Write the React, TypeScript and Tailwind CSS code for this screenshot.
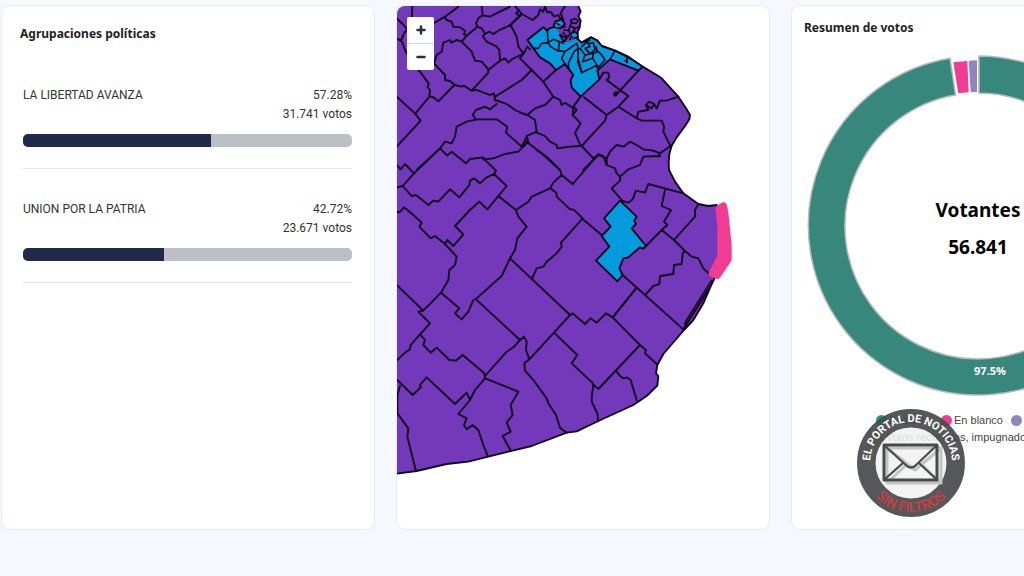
import { Minus, Plus } from "lucide-react"

const parties = [
  { name: "LA LIBERTAD AVANZA", percent: 57.28, votes: "31.741" },
  { name: "UNION POR LA PATRIA", percent: 42.72, votes: "23.671" },
]

// Land mass of the province, in map units
const land =
  "M-10 -10H547L544 0L551 17L544 30L551 44L547 67L542 77L543 100L554 110L582 94L601 104L614 120L654 134L694 152L737 182L779 207L794 217L844 272L867 307L879 327L877 340L864 360L839 394L824 419L817 444L815 470L816 492L834 527L859 562L904 594L934 600L959 597L968 690L968 760L951 820L937 850L919 892L889 942L861 972L799 1044L781 1077L777 1102L784 1110L781 1139L749 1170L709 1197L604 1245L539 1276L509 1280L404 1320L334 1337L214 1367L149 1374L59 1395L0 1403L-10 1404Z"

// District borders, grouped by map sheet
const sheets = [
  {
    name: "noroeste",
    transform: "translate(-21 -18)",
    borders:
      "M67 18L66 50M20 55L38 72L52 88M20 118L35 118L42 100L52 88M25 118L36 125L45 150L70 195L90 215L116 250L113 262L120 270L118 288L130 292L145 304L193 255M118 290L75 342M20 290L75 340L92 362L20 440M130 70L165 50L205 20M165 50L170 60L185 65L190 80L210 82L225 92L222 103L230 107L262 80L258 70L265 55L278 46L275 18M278 46L300 50L360 20M262 80L275 85L285 102L298 95L310 102L325 92L362 75L390 48L378 40L388 30M230 107L215 125L200 120L185 128L180 120L160 128L155 155L140 165L132 190L165 225L165 240L180 243L195 255L215 260L222 257L245 272L260 270L300 285L312 280L315 300L345 310L355 315L375 330L410 345M245 272L295 218L295 208L275 185L255 182L245 155L215 125M295 210L330 182L328 150L320 140L290 125L278 108L285 102M330 182L345 175L355 188L365 178L398 162L405 155M362 75L380 110L385 140L400 160M425 210L395 240L315 290M320 312L300 328L285 320L258 330L248 345L258 358M80 510L150 445L165 425L185 430L195 410L200 380L230 365L260 358L320 358L352 380L348 398L395 440M150 445L172 467L185 455L228 490L240 477L280 472M280 478L310 475L345 462L385 455L400 440L410 425",
  },
  {
    name: "noreste",
    transform: "translate(339 -18)",
    borders:
      "M15 18L35 42L68 60L85 45L90 28L100 35L105 20L112 38L122 35L132 50L145 45L150 55L160 60M165 18L152 40L160 60M35 42L0 75M30 175L42 158L52 140L60 148M30 175L65 210L100 245L130 290L105 315L75 325L52 345M100 245L138 210M130 290L150 300L155 315L165 308L190 325L188 345M212 290L190 320L200 330L188 345L212 370L195 398L212 438M222 292L290 345L285 362L215 438L250 475L265 465L290 475M290 345L325 320L355 288L330 270L290 240L298 232L295 218L280 218L268 238M385 212L318 285M325 320L380 355M30 338L52 345L75 360L80 395L50 408L55 425L40 440M80 398L105 408L120 425L140 435L142 445L180 440L212 438M50 425L95 460L150 510M380 355L385 335L415 330L408 315L418 305L432 312L425 325L412 318M432 312L440 325L450 302L470 302L505 290M380 355L395 362L455 362L462 380L460 395L480 435M220 510L265 465M290 475L300 455L320 435L340 440L360 425L380 435L400 448L430 452L450 460L482 438M450 460L445 470M290 475L290 495M50 410L35 440L40 440",
  },
  {
    name: "oeste",
    transform: "translate(-21 432)",
    borders:
      "M20 112L38 108L72 70L145 0M20 45L32 58L45 42L72 70M38 108L65 138L78 135L115 165L130 152L145 155L180 118L208 142L238 105L240 92L252 85L270 100L290 82L312 72L318 62L280 25M312 72L350 108L325 138L292 178L268 155L240 180L195 228L220 253L190 288L172 270L165 282M20 185L30 186L42 172L70 195L95 218L88 230L122 265L135 258L165 282L200 320L195 345L178 360L175 390L153 428L100 482L20 405M153 428L208 475L195 490L215 508L235 485L250 450L258 447L310 400L335 378L360 325L375 300L382 265L410 230L385 200L378 180L325 138M378 180L415 155L425 140L480 115L490 98L515 75L510 60L470 20L440 0M360 325L540 495M425 388L440 355L460 350L470 335L500 310L515 290L513 278L578 205M482 115L500 130L500 140L540 178L550 178L576 203M515 75L548 102",
  },
  {
    name: "este",
    transform: "translate(489 432)",
    borders:
      "M38 102L85 48L115 12L130 18L140 45L165 55L170 70L180 80L180 92L155 115L185 150M65 205L125 255M180 80L205 58L240 45L250 20L300 18M185 152L205 158L218 148L228 122L255 128L265 102L370 130M315 120L305 168L333 180L312 215L322 225L305 240L258 288M305 240L342 270L405 200L405 180L415 162M342 270L375 303L395 320L415 325L430 355L452 375M375 303L368 310L365 342L342 345L340 372L300 378L298 402L280 408L258 432M188 375L370 538M228 415L160 500",
  },
  {
    name: "suroeste",
    transform: "translate(-21 882)",
    borders:
      "M98 32L85 35L120 70L90 103L62 135L60 148L45 158L20 182M90 103L105 120L100 135L122 158L140 143L178 180L198 182L218 165L283 220L285 235M285 228L350 155L370 142L390 120L402 110L410 125L408 150L418 178L403 190L405 212L430 240L470 295L475 310L498 345L510 383L530 398M258 -2L390 120M418 178L492 98L540 45M492 98L562 165L545 190L608 249M285 235L385 275L362 315L368 345L350 368L362 395L338 408L362 452M285 235L255 270L240 300L205 342L230 355L222 375L230 388L248 375L265 390L280 435L292 465M240 300L230 278L195 312L110 232L90 255L92 262L68 285L20 238M30 258L22 285L22 340L55 385L52 410L78 513",
  },
  {
    name: "sureste",
    transform: "translate(429 852)",
    borders:
      "M90 75L98 70L135 102L152 85L170 98L198 70L218 82L285 0M218 82L300 165L175 297L158 282M300 165L318 180L315 190L350 222M228 242L240 258L250 265L260 262L272 270L290 330M160 285L155 320L155 335L172 370L175 393M430 118L505 0",
  },
]

const metroArea =
  "M52 120L100 82L112 92L118 85L130 82L135 65L155 58L165 72L150 85L162 90L150 105L160 125L180 118L200 112L203 118L215 128L243 112L262 122L275 138L315 152L355 172L398 200L385 212L300 178L262 212L268 238L212 290L185 262L182 240L190 225L175 205L165 192L138 210L120 190L90 172Z"

const metroBorders =
  "M112 92L114 128L95 130L85 145L70 145M114 128L130 118L160 130M114 128L122 140L142 152L165 155L200 130L205 145L192 155L175 190L176 205M165 155L155 175L165 192M145 152L148 128M205 145L203 185L215 218L262 195M203 170L215 215M210 145L225 165L218 185L248 175L250 160L225 165M215 140L232 125L240 140L225 145L240 160L255 150L250 128L240 130M225 125L240 120M250 160L265 155L275 165L285 180L262 205L258 190L248 175M262 155L258 140M315 152L300 178M350 172L352 188L345 182M130 82L150 85L165 80M140 70L150 76M162 90L178 92L180 105L170 110L160 98M150 105L165 112L180 105L190 92L200 100M180 78L195 85L190 98M182 60L195 56L205 62L198 70L185 68ZM185 68L180 78L175 92M195 85L210 80M160 125L175 110M180 118L185 108"

function ZoomControls() {
  return (
    <div className="absolute left-2.5 top-[11px] flex flex-col overflow-hidden rounded-xs bg-white">
      <button type="button" aria-label="Acercar" className="flex h-[27px] w-[27px] items-center justify-center border-b border-gray-300 text-[#22304a]">
        <Plus size={12} strokeWidth={5} />
      </button>
      <button type="button" aria-label="Alejar" className="flex h-[26px] w-[27px] items-center justify-center text-[#22304a]">
        <Minus size={12} strokeWidth={5} />
      </button>
    </div>
  )
}

function ProvinceMap() {
  return (
    <svg viewBox="0 0 1116 1569" className="block w-full" role="img" aria-label="Mapa de resultados">
      <g stroke="#0f061c" strokeWidth="5.6" strokeLinejoin="round" strokeLinecap="round">
        <path d={land} fill="#7339ba" />
        {sheets.map((sheet) => (
          <path key={sheet.name} d={sheet.borders} transform={sheet.transform} fill="none" />
        ))}
        <g transform="translate(339 -18)">
          <path d={metroArea} fill="#049bdd" />
          <path d="M140 86L160 80L176 92L160 98L150 104ZM165 112L180 104L190 116L180 126L168 122Z" fill="#7339ba" stroke="none" />
          <path d="M178 92L196 96L202 108L190 112L182 104Z" fill="#049bdd" stroke="none" />
          <path d={metroBorders} fill="none" strokeWidth="4.8" />
          <path d="M309 280L318 272L326 276L321 288L312 290Z" fill="#0f061c" stroke="none" />
        </g>
        <g transform="translate(489 432)">
          <path
            d="M180 152L230 200L222 212L228 222L215 235L258 288L250 296L240 292L205 322L190 325L178 355L188 375L172 394L108 332L148 290L125 258L152 230L132 205Z"
            fill="#049bdd"
          />
          <path d="M455 392L380 510L374 522" fill="none" />
        </g>
      </g>
      <path
        d="M966 608L979 600L983 620L993 718L993 760L961 808L946 802L972 752L972 660Z"
        fill="#f03c92"
        stroke="#f03c92"
        strokeWidth="22"
        strokeLinejoin="round"
      />
    </svg>
  )
}

function VotesDonut() {
  return (
    <svg viewBox="-172 -172 344 344" className="mx-auto mt-4 block w-[344px]" role="img" aria-label="Resumen de votos">
      <path
        d="M1 -170A169.5 169.5 0 1 1 -28 -167.7L-22.5 -131.1A133 133 0 1 0 1 -133Z"
        fill="#37877d"
        stroke="#b3bbb7"
        strokeWidth="1.5"
      />
      <path d="M-24.7 -163.7L-10.7 -165L-9.3 -133.7L-19.7 -132.7Z" fill="#f03c92" />
      <path d="M-9.3 -165.3L-1 -165.7L-1 -134L-7.3 -133.8Z" fill="#9484bd" />
      <g textAnchor="middle" className="font-['Noto_Sans',sans-serif] font-bold">
        <text y="-9" className="text-[19px]">Votantes</text>
        <text y="28" className="text-[19px]">56.841</text>
        <text x="12" y="149" fill="#fff" className="text-[11px]">97.5%</text>
      </g>
    </svg>
  )
}

function Legend() {
  return (
    <ul className="mt-3.5 pl-20 font-['Liberation_Sans',sans-serif] text-[11px] leading-[17px] whitespace-nowrap text-[#444]">
      <li className="flex gap-2 pl-1">
        <span className="flex w-[57px] items-center gap-0.5">
          <i className="size-[11px] shrink-0 rounded-full bg-[#1f9c7c]" />
          Positivos
        </span>
        <span className="flex w-[62px] items-center gap-0.5">
          <i className="size-[11px] shrink-0 rounded-full bg-[#f03c92]" />
          En blanco
        </span>
        <span className="flex items-center gap-0.5">
          <i className="size-[11px] shrink-0 rounded-full bg-[#9484bd]" />
          Nulos
        </span>
      </li>
      <li className="flex items-center gap-[3px]">
        <i className="size-[11px] shrink-0 rounded-full bg-[#d8bd3a]" />
        Votos recurridos, impugnados
      </li>
    </ul>
  )
}

function PortalLogo() {
  return (
    <svg viewBox="-54 -54 108 108" className="absolute left-[857px] top-[409px] size-[108px]" role="img" aria-label="El portal de noticias">
      <defs>
        <path id="arc-top" d="M-39.6 10.6A41 41 0 1 1 39.6 10.6" />
        <path id="arc-bottom" d="M-49 0A49 49 0 0 0 49 0" />
      </defs>
      <circle r="35.5" fill="#f1f1f1" fillOpacity="0.87" />
      <circle r="44.7" fill="none" stroke="#484b4b" strokeOpacity="0.93" strokeWidth="18.5" />
      <g textAnchor="middle" className="font-[Roboto,sans-serif]">
        <text fill="#fff" className="text-[11px] font-bold">
          <textPath href="#arc-top" startOffset="50%">EL PORTAL DE NOTICIAS</textPath>
        </text>
        <text fill="#cf3a45" className="text-[14px] font-medium">
          <textPath href="#arc-bottom" startOffset="50%">SIN FILTROS</textPath>
        </text>
      </g>
      <g fill="none" strokeLinejoin="round" strokeLinecap="round">
        <path d="M-24 -15H30V20H-24ZM-24 -15L4 7L30 -15M-24 20L-5 2M30 20L11 2" stroke="#c4c4c4" strokeWidth="3" />
        <path d="M-27 -18H26V17H-27Z" stroke="#484b4b" strokeWidth="3" />
        <path d="M-26 -17L-4 3Q0 6 4 3L25 -17M-26 16L-8 0M25 16L8 0" stroke="#484b4b" strokeWidth="2.2" />
      </g>
    </svg>
  )
}

export default function App() {
  return (
    <div className="relative min-h-screen overflow-hidden bg-[#f5f8ff] pl-0.5 pt-1.5 font-[Roboto,sans-serif]">
      <main className="grid grid-cols-[repeat(3,36.4%)] gap-[23px]">
        {/* Agrupaciones */}
        <section className="rounded-lg bg-white pt-[18px] ring-1 ring-[#e8ebf3]">
          <h2 className="pl-[18px] font-['Noto_Sans',sans-serif] text-[12px] leading-5 font-bold text-[#222]">
            Agrupaciones políticas
          </h2>
          <ul className="mt-[11px] pl-[21px] pr-[22px] text-[12px] leading-[19px] text-[#333]">
            {parties.map((party) => (
              <li key={party.name} className="border-b border-[#e4e4e6] pb-[21px] pt-[31px]">
                <div className="flex justify-between">
                  <span>{party.name}</span>
                  <div className="text-right">
                    <p>{party.percent}%</p>
                    <p>{party.votes} votos</p>
                  </div>
                </div>
                <div
                  role="progressbar"
                  aria-label={party.name}
                  aria-valuenow={party.percent}
                  className="mt-2.5 h-[13px] overflow-hidden rounded-[5px] bg-[#bcbfc6]"
                >
                  <div className="h-full bg-[#202a4d]" style={{ width: `${party.percent}%` }} />
                </div>
              </li>
            ))}
          </ul>
        </section>

        {/* Mapa */}
        <section className="relative overflow-hidden rounded-lg bg-white ring-1 ring-[#e8ebf3]">
          <ProvinceMap />
          <ZoomControls />
        </section>

        {/* Resumen */}
        <section className="rounded-lg bg-white pt-3 ring-1 ring-[#e8ebf3]">
          <h2 className="pl-3 font-['Noto_Sans',sans-serif] text-[12px] leading-5 font-bold text-[#222]">
            Resumen de votos
          </h2>
          <VotesDonut />
          <Legend />
        </section>
      </main>
      <PortalLogo />
    </div>
  )
}
